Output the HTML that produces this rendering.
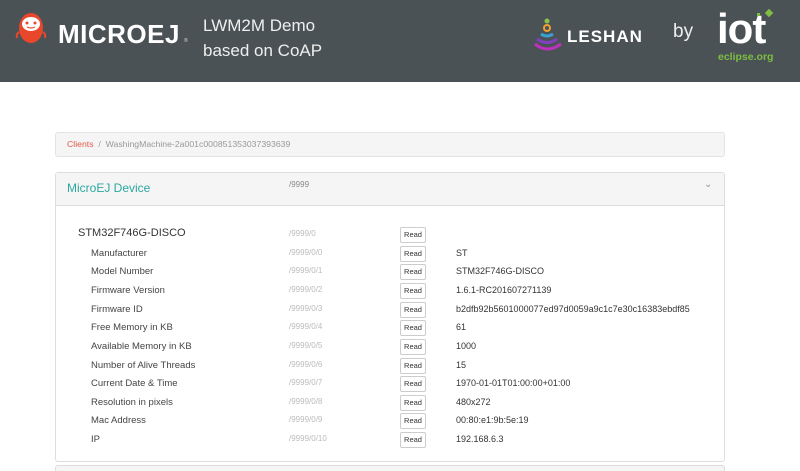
<!DOCTYPE html>
<html><head><style>
*{margin:0;padding:0;box-sizing:border-box}
html,body{width:800px;height:471px;overflow:hidden}
body{background:#fff;font-family:"Liberation Sans",sans-serif;position:relative}
#hd{position:absolute;left:0;top:0;width:800px;height:82px;background:#4b5256}
.abs{position:absolute}
.row{position:absolute;left:0;width:800px;height:18px;font-size:9.5px;color:#444}
.row .l{position:absolute;left:91px;top:3px}
.row .p{position:absolute;left:289px;top:3px;color:#bbb;font-size:8px}
.row .b{position:absolute;left:400px;top:1px;width:26px;height:16px;border:1px solid #ccc;border-radius:2px;font-size:7.5px;text-align:center;line-height:14px;color:#333;background:#fff}
.row .v{position:absolute;left:456px;top:3px;color:#333;font-size:9px}
</style></head><body>
<div id="hd">
<svg class="abs" style="left:12px;top:10px" width="38" height="38" viewBox="0 0 38 38">
<path d="M7 22 Q4 24 5 28 M31 22 Q34 24 33 28" stroke="#e8472b" stroke-width="2" fill="none"/>
<ellipse cx="19" cy="18" rx="12" ry="15" fill="#e8472b"/>
<ellipse cx="19" cy="14" rx="9" ry="7" fill="#fff"/>
<circle cx="15" cy="13" r="1.5" fill="#e8472b"/><circle cx="23" cy="13" r="1.5" fill="#e8472b"/>
<path d="M15 17 Q19 19 23 17" stroke="#e8472b" stroke-width="1.2" fill="none"/>
</svg>
<div class="abs" style="left:58px;top:19px;color:#fff;font-weight:bold;font-size:26px;letter-spacing:0.5px">MICROEJ</div>
<div class="abs" style="left:184px;top:38px;color:#ddd;font-size:5px">®</div>
<div class="abs" style="left:203px;top:13px;color:#eee;font-size:17px;line-height:25px">LWM2M Demo<br>based on CoAP</div>
<svg class="abs" style="left:533px;top:16px" width="34" height="38" viewBox="0 0 34 38">
<circle cx="14" cy="5" r="2.5" fill="#8bc34a"/>
<circle cx="14" cy="12" r="3" fill="none" stroke="#f0a030" stroke-width="2"/>
<path d="M8 18 Q14 22 20 18" stroke="#3aa0d0" stroke-width="3" fill="none"/>
<path d="M4 23 Q14 30 24 23" stroke="#8040c0" stroke-width="3" fill="none"/>
<path d="M2 28 Q14 38 28 28" stroke="#c030c0" stroke-width="3" fill="none"/>
</svg>
<div class="abs" style="left:567px;top:27px;color:#fff;font-weight:bold;font-size:17px;letter-spacing:1px">LESHAN</div>
<div class="abs" style="left:673px;top:21px;color:#eee;font-size:19px">by</div>
<div class="abs" style="left:717px;top:6px;color:#fff;font-weight:bold;font-size:42px;letter-spacing:-1px;line-height:46px">iot</div>
<div class="abs" style="left:766px;top:10px;width:6px;height:6px;background:#7cbd42;transform:rotate(45deg)"></div>
<div class="abs" style="left:757px;top:13px;width:3px;height:3px;background:#7cbd42"></div>
<div class="abs" style="left:718px;top:51px;color:#7cbd42;font-weight:bold;font-size:10.5px">eclipse.org</div>
</div>
<div class="abs" style="left:55px;top:132px;width:670px;height:25px;background:#f5f5f5;border:1px solid #e3e3e3;border-radius:3px;font-size:8.7px;line-height:23px;padding-left:11px;color:#999"><span style="color:#e15b4d">Clients</span> &nbsp;/&nbsp; WashingMachine-2a001c000851353037393639</div>
<div class="abs" style="left:55px;top:172px;width:670px;height:290px;border:1px solid #ddd;border-radius:3px">
<div style="height:33px;background:#f5f5f5;border-bottom:1px solid #ddd;position:relative">
<div class="abs" style="left:11px;top:8px;color:#2aa8a0;font-size:12px">MicroEJ Device</div>
<div class="abs" style="left:233px;top:7px;color:#888;font-size:8px">/9999</div>
<div class="abs" style="left:648px;top:6px;color:#999;font-size:10px">&#8964;</div>
</div></div>
<div class="abs" style="left:55px;top:465px;width:670px;height:20px;background:#f5f5f5;border:1px solid #ddd;border-radius:3px"></div>
<div class="row" style="top:226px"><span class="l" style="left:78px;font-size:11px;top:1px;color:#333">STM32F746G-DISCO</span><span class="p">/9999/0</span><span class="b">Read</span></div>
<div class="row" style="top:245px"><span class="l">Manufacturer</span><span class="p">/9999/0/0</span><span class="b">Read</span><span class="v">ST</span></div>
<div class="row" style="top:263px"><span class="l">Model Number</span><span class="p">/9999/0/1</span><span class="b">Read</span><span class="v">STM32F746G-DISCO</span></div>
<div class="row" style="top:282px"><span class="l">Firmware Version</span><span class="p">/9999/0/2</span><span class="b">Read</span><span class="v">1.6.1-RC201607271139</span></div>
<div class="row" style="top:301px"><span class="l">Firmware ID</span><span class="p">/9999/0/3</span><span class="b">Read</span><span class="v">b2dfb92b5601000077ed97d0059a9c1c7e30c16383ebdf85</span></div>
<div class="row" style="top:319px"><span class="l">Free Memory in KB</span><span class="p">/9999/0/4</span><span class="b">Read</span><span class="v">61</span></div>
<div class="row" style="top:338px"><span class="l">Available Memory in KB</span><span class="p">/9999/0/5</span><span class="b">Read</span><span class="v">1000</span></div>
<div class="row" style="top:357px"><span class="l">Number of Alive Threads</span><span class="p">/9999/0/6</span><span class="b">Read</span><span class="v">15</span></div>
<div class="row" style="top:375px"><span class="l">Current Date &amp; Time</span><span class="p">/9999/0/7</span><span class="b">Read</span><span class="v">1970-01-01T01:00:00+01:00</span></div>
<div class="row" style="top:394px"><span class="l">Resolution in pixels</span><span class="p">/9999/0/8</span><span class="b">Read</span><span class="v">480x272</span></div>
<div class="row" style="top:412px"><span class="l">Mac Address</span><span class="p">/9999/0/9</span><span class="b">Read</span><span class="v">00:80:e1:9b:5e:19</span></div>
<div class="row" style="top:431px"><span class="l">IP</span><span class="p">/9999/0/10</span><span class="b">Read</span><span class="v">192.168.6.3</span></div>
</body></html>
